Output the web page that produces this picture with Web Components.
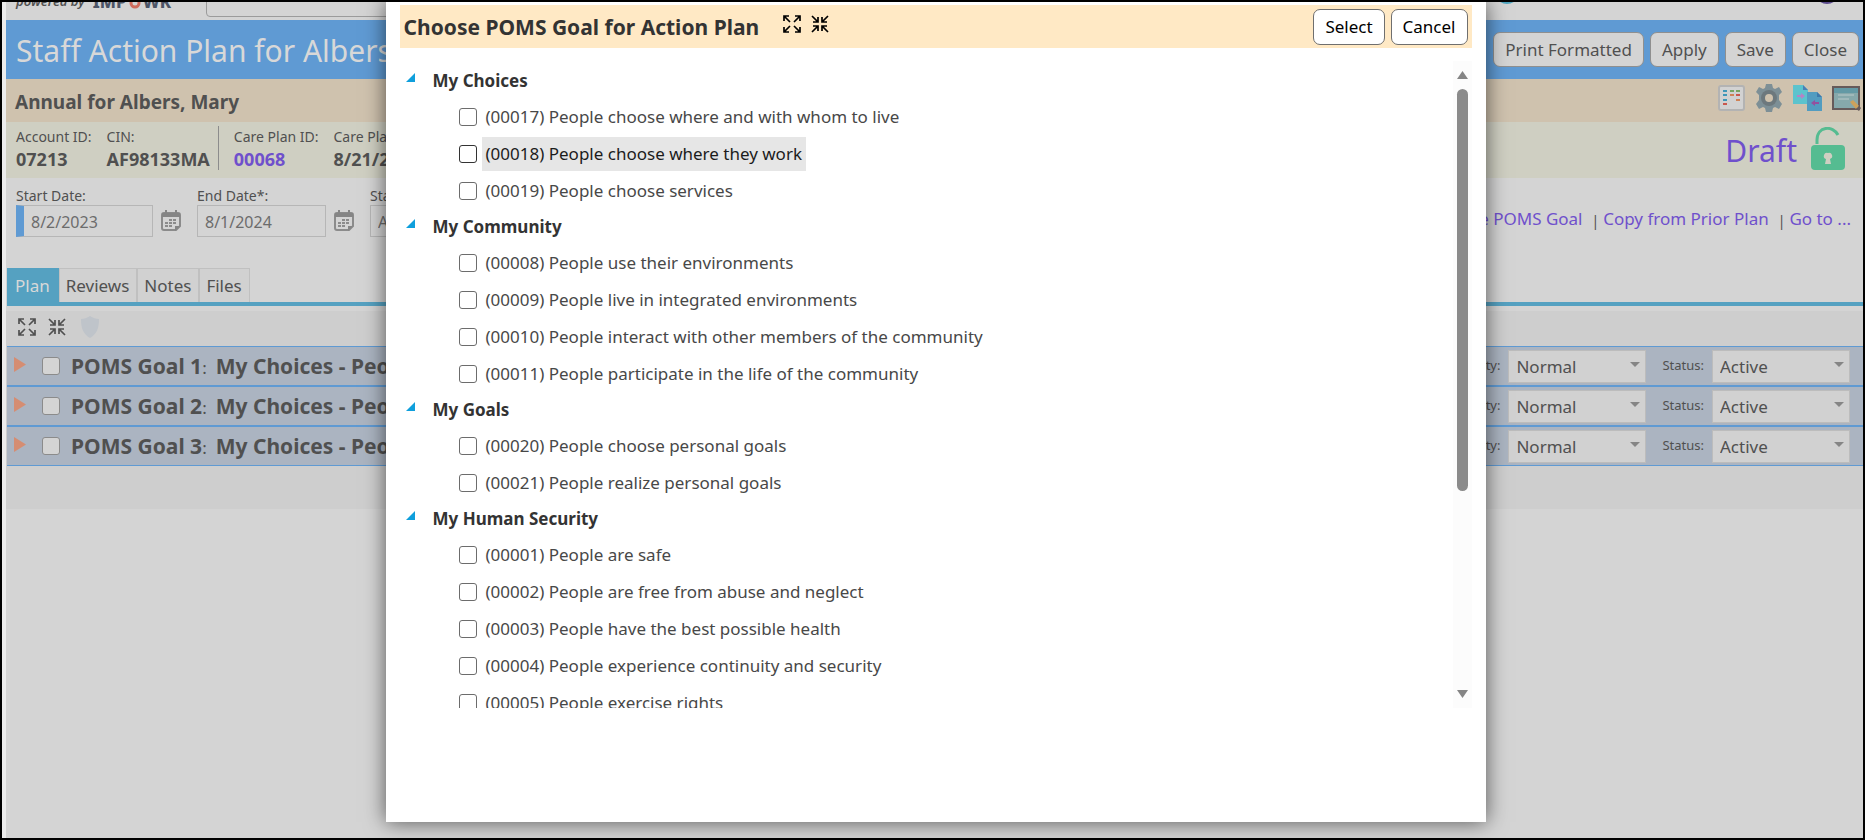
<!DOCTYPE html>
<html lang="en">
<head>
<meta charset="UTF-8">
<meta name="viewport" content="width=device-width, initial-scale=1.0">
<title>Staff Action Plan</title>
<style>
    * { box-sizing: border-box; }

    body {
        margin: 0;
        height: 100vh;
        overflow: hidden;
        font-family: "Noto Sans", "Open Sans", sans-serif;
        font-size: 17px;
        color: #505050;
        background: #d4d4d4;
    }
</style>
</head>
<body>
    <staff-plan-page></staff-plan-page>

<script>
// shared reset for every shadow root
const base = `
    *, *::before, *::after { box-sizing: border-box; }
    button, input, select { font: inherit; color: inherit; margin: 0; }
    a { color: #6f50cc; text-decoration: none; }
    svg { display: block; flex: none; }
`;

const checkbox = `
    input[type="checkbox"] {
        appearance: none;
        flex: none;
        width: 18px;
        height: 18px;
        border: 1px solid #6c6c6c;
        border-radius: 3px;
        background: #fff;
    }
`;

const icons = {
    expand: `
        <svg width="18" height="18" viewBox="0 0 18 18" fill="none" stroke="currentColor" stroke-width="1.700">
            <path d="M1 6V1h5M1 1l6 6M12 1h5v5M17 1l-6 6M1 12v5h5M1 17l6-6M17 12v5h-5M17 17l-6-6"/>
        </svg>`,
    collapse: `
        <svg width="18" height="18" viewBox="0 0 18 18" fill="none" stroke="currentColor" stroke-width="1.700">
            <path d="M7 2v5H2M7 7L1 1M11 2v5h5M11 7l6-6M2 11h5v5M7 11l-6 6M16 11h-5v5M11 11l6 6"/>
        </svg>`,
    shield: `
        <svg width="20" height="24" viewBox="0 0 20 24">
            <path d="M10 1c3 2 6 3 9 3 0 9-2 15-9 19C3 19 1 13 1 4c3 0 6-1 9-3z" fill="#bfc4ca"/>
        </svg>`,
    calendar: `
        <svg width="20" height="22" viewBox="0 0 20 22">
            <path d="M3 3h14a2 2 0 0 1 2 2v11l-4 4H3a2 2 0 0 1-2-2V5a2 2 0 0 1 2-2z" fill="none" stroke="#8b8b8b" stroke-width="2"/>
            <path d="M1 3h18v4H1zM4 0h2v4H4zM14 0h2v4h-2zM14 21v-5h5z" fill="#858585"/>
            <g fill="#8b8b8b">
                <path d="M8 9h3v2H8zM12 9h3v2h-3zM4 12h3v2H4zM8 12h3v2H8zM12 12h3v2h-3zM4 15h3v2H4zM8 15h3v2H8z"/>
            </g>
        </svg>`,
    list: `
        <svg width="27" height="26" viewBox="0 0 27 26">
            <rect x="1" y="1" width="25" height="24" rx="2" fill="#d2d2d2" stroke="#b3b3b3" stroke-width="2"/>
            <path d="M5 5h4v2H5zM5 9h4v2H5zM5 14h4v2H5z" fill="#3f97b8"/>
            <path d="M12 5h4v2h-4zM18 5h4v2h-4z" fill="#76a561"/>
            <path d="M12 9h4v2h-4zM18 14h4v2h-4z" fill="#d08256"/>
            <path d="M18 9h4v2h-4zM5 18h4v2H5z" fill="#c9584e"/>
        </svg>`,
    gear: `
        <svg width="28" height="30" viewBox="0 0 28 30">
            <path d="M11 1h6l1 4 2 1 4-2 3 5-3 3v5l3 4-3 5-4-2-2 1-1 4h-6l-1-4-2-1-4 2-3-5 3-4v-5L1 9l3-5 4 2 2-1z" fill="#7d8f96"/>
            <circle cx="14" cy="15" r="8" fill="#6d787d"/>
            <circle cx="14" cy="15" r="4" fill="#cfc2ae"/>
        </svg>`,
    copy: `
        <svg width="29" height="28" viewBox="0 0 29 28">
            <path d="M0 1h10l5 5v14H0z" fill="#5cc3cd"/>
            <path d="M10 1l5 5h-5z" fill="#4b7fb5"/>
            <path d="M14 8h10l5 5v14H14z" fill="#529cc0"/>
            <path d="M24 8l5 5h-5z" fill="#3e79ab"/>
            <path d="M4 11h4V9l4 3-4 3v-2H4z" fill="#b583c6"/>
            <path d="M26 18h-4v-2l-4 3 4 3v-2h4z" fill="#93519f"/>
        </svg>`,
    board: `
        <svg width="29" height="28" viewBox="0 0 29 28">
            <rect x="1" y="3" width="26" height="22" fill="#86a8ab" stroke="#665a5a" stroke-width="2"/>
            <path d="M2 4h24v5H2z" fill="#6399a5"/>
            <path d="M6 11h16M6 15h11" stroke="#b9c9ca" stroke-width="1"/>
            <path d="M18 18l3-2 6 6-3 3z" fill="#cda25c"/>
            <path d="M24 25l3-3 2 2-2 3z" fill="#665a5a"/>
        </svg>`,
    unlock: `
        <svg width="34" height="43" viewBox="0 0 34 43">
            <path d="M6 17v-4C6 -1 22 -2 27 8" fill="none" stroke="#55bc91" stroke-width="3"/>
            <rect y="18" width="34" height="25" rx="4" fill="#55bc91"/>
            <path d="M17 26a3 3 0 0 1 2 6l1 5h-6l1-5a3 3 0 0 1 2-6z" fill="#cfcfc2"/>
        </svg>`
};

class AppHeader extends HTMLElement {
    constructor() {
        super();
        this.attachShadow({ mode: 'open' }).innerHTML = `
            <style>
                ${base}
                /* scrolled under the top edge, only its lower part shows */
                :host {
                    display: flex;
                    align-items: flex-end;
                    height: 18px;
                    overflow: hidden;
                    padding: 0 24px 0 10px;
                    line-height: 20px;
                }
                .powered { margin-bottom: 9px; font-size: 13px; font-style: italic; font-weight: 600; }
                .brand {
                    display: flex;
                    align-items: flex-end;
                    gap: 2px;
                    width: 113px;
                    margin: 0 0 6px 8px;
                    font-size: 17px;
                    font-weight: 800;
                    line-height: 24px;
                    color: #4c5466;
                }
                .brand svg { margin-bottom: 5px; }
                input {
                    width: 420px;
                    height: 32px;
                    margin-bottom: 3px;
                    border: 1px solid #9b9b9b;
                    border-radius: 4px;
                    background: #d4d4d4;
                }
                .dots {
                    display: flex;
                    flex: 1;
                    gap: 296px;
                    justify-content: flex-end;
                    align-self: flex-start;
                }
                .dots svg { margin-top: -22px; }
            </style>
            <span class="powered">powered by</span>
            <span class="brand">IMP
                <svg width="12" height="12" viewBox="0 0 12 12"><circle cx="6" cy="6" r="4" fill="none" stroke="#cf6b5c" stroke-width="3"/></svg>
                WR</span>
            <input type="search" aria-label="Search">
            <span class="dots">
                <svg width="24" height="24" viewBox="0 0 24 24"><circle cx="12" cy="12" r="12" fill="#4fa5bf"/></svg>
                <svg width="24" height="24" viewBox="0 0 24 24"><circle cx="12" cy="12" r="11" fill="none" stroke="#5a4a8c" stroke-width="2"/></svg>
            </span>
        `;
    }
}

class TitleBar extends HTMLElement {
    constructor() {
        super();
        this.attachShadow({ mode: 'open' }).innerHTML = `
            <style>
                ${base}
                :host {
                    display: flex;
                    align-items: center;
                    justify-content: space-between;
                    height: 59px;
                    padding: 0 4px 0 10px;
                    background: #5f9ad3;
                }
                h1 { margin: 0; padding-top: 2px; font-size: 30px; font-weight: 400; color: #d8d8d8; white-space: nowrap; }
                .actions { display: flex; gap: 6px; }
                ::slotted(button) {
                    height: 35px;
                    padding: 0 11px;
                    border: 1px solid #8f8f8f;
                    border-radius: 7px;
                    background: #d4d4d4;
                    font: inherit;
                    color: #505050;
                    white-space: nowrap;
                }
            </style>
            <h1>${this.getAttribute('heading')}</h1>
            <div class="actions"><slot></slot></div>
        `;
    }
}

class PlanSummary extends HTMLElement {
    constructor() {
        super();
        this.attachShadow({ mode: 'open' }).innerHTML = `
            <style>
                ${base}
                :host { display: block; white-space: nowrap; }
                .name, .ids { display: flex; align-items: center; justify-content: space-between; }
                .name { height: 43px; padding: 2px 2px 0 9px; background: #cfc2ae; }
                h2 { margin: 0; font-size: 19px; line-height: 26px; }
                .tools { display: flex; align-items: center; gap: 10px; padding-bottom: 8px; }
                .ids { height: 56px; padding: 0 18px 0 10px; background: #cfcfc2; }
                dl { display: flex; margin: 0; padding-bottom: 4px; gap: 15px; }
                dl div { display: flex; flex-direction: column; }
                dt { font-size: 14px; line-height: 22px; }
                dd { margin: 0; font-size: 18px; font-weight: 700; line-height: 22px; }
                .line { width: 1px; margin-left: -7px; background: #8c8c8c; }
                .state { display: flex; align-items: center; gap: 14px; font-size: 30px; }
                .state svg { margin-bottom: 4px; }
            </style>
            <div class="name">
                <h2>Annual for Albers, Mary</h2>
                <div class="tools">${icons.list}${icons.gear}${icons.copy}${icons.board}</div>
            </div>
            <div class="ids">
                <dl>
                    <div><dt>Account ID:</dt><dd>07213</dd></div>
                    <div><dt>CIN:</dt><dd>AF98133MA</dd></div>
                    <div class="line"></div>
                    <div><dt>Care Plan ID:</dt><dd><a href="#plan">00068</a></dd></div>
                    <div><dt>Care Plan Date:</dt><dd>8/21/2023</dd></div>
                </dl>
                <div class="state"><a href="#draft">Draft</a>${icons.unlock}</div>
            </div>
        `;
    }
}

class PlanFields extends HTMLElement {
    constructor() {
        super();
        this.attachShadow({ mode: 'open' }).innerHTML = `
            <style>
                ${base}
                :host {
                    display: flex;
                    justify-content: space-between;
                    height: 90px;
                    padding: 8px 12px 0 10px;
                    white-space: nowrap;
                }
                .fields { display: flex; gap: 16px; }
                .field { display: flex; flex-direction: column; }
                .field label { font-size: 14px; line-height: 19px; }
                .box { display: flex; align-items: center; gap: 8px; }
                input {
                    width: 129px;
                    height: 32px;
                    padding: 2px 7px 0;
                    border: 1px solid #b6b6b6;
                    background: #d4d4d4;
                    font-size: 16px;
                    color: #6c6c6c;
                }
                .required { width: 137px; border-left: 8px solid #5f9ad3; }
                nav { display: flex; padding-top: 21px; line-height: 24px; }
                nav span { padding: 2px 4px 0 9px; font-size: 14px; }
            </style>
            <div class="fields">
                <div class="field">
                    <label for="start">Start Date:</label>
                    <div class="box"><input class="required" id="start" value="8/2/2023">${icons.calendar}</div>
                </div>
                <div class="field">
                    <label for="end">End Date*:</label>
                    <div class="box"><input id="end" value="8/1/2024">${icons.calendar}</div>
                </div>
                <div class="field">
                    <label for="state">Status:</label>
                    <div class="box"><input id="state" value="Active"></div>
                </div>
            </div>
            <nav>
                <a href="#create">Create POMS Goal</a><span>|</span>
                <a href="#copy">Copy from Prior Plan</a><span>|</span>
                <a href="#goto">Go to ...</a>
            </nav>
        `;
    }
}

class PlanTabs extends HTMLElement {
    constructor() {
        super();
        this.attachShadow({ mode: 'open' }).innerHTML = `
            <style>
                ${base}
                :host { display: flex; margin: 0 0 5px 1px; border-bottom: 4px solid #55a1c1; }
                button {
                    height: 34px;
                    padding: 0 7px 0 6px;
                    border: 1px solid #c0c0c0;
                    border-bottom: 0;
                    background: #d1d1d1;
                }
                button[aria-selected="true"] { padding: 0 8px 0 7px; border-color: #55a1c1; background: #55a1c1; color: #d8d8d8; }
            </style>
            <button role="tab" aria-selected="true">Plan</button>
            <button role="tab">Reviews</button>
            <button role="tab">Notes</button>
            <button role="tab">Files</button>
        `;
    }
}

class GoalRow extends HTMLElement {
    constructor() {
        super();
        const no = this.getAttribute('number');
        this.attachShadow({ mode: 'open' }).innerHTML = `
            <style>
                ${base}
                ${checkbox}
                :host {
                    display: flex;
                    align-items: center;
                    justify-content: space-between;
                    height: 40px;
                    padding: 0 13px 0 7px;
                    border: solid #5f9ad3;
                    border-width: 1px 0;
                    background: #abb4c1;
                    white-space: nowrap;
                }
                .goal, .settings { display: flex; align-items: center; }
                .goal svg { margin: 0 16px 4px 0; }
                input[type="checkbox"] { margin-right: 11px; border-color: #8b8b8b; background: #d4d4d4; }
                h3 { margin: 0; padding-top: 2px; font-size: 21px; line-height: 30px; }
                h3 span { margin-right: 9px; font-size: 17px; font-weight: 400; }
                label { margin-right: 8px; padding-bottom: 3px; font-size: 13px; }
                .pick { display: grid; align-items: center; width: 138px; margin-right: 16px; }
                .pick:last-child { margin-right: 0; }
                .pick > * { grid-area: 1 / 1; }
                .pick svg { justify-self: end; margin: 0 6px 4px 0; pointer-events: none; }
                select {
                    appearance: none;
                    width: 100%;
                    height: 33px;
                    padding: 0 7px;
                    border: 1px solid #bcbcbc;
                    border-radius: 0;
                    background: #d1d1d1;
                }
            </style>
            <div class="goal">
                <svg width="12" height="15" viewBox="0 0 12 15"><path d="M0 0l12 7.500L0 15z" fill="#d58d72"/></svg>
                <input type="checkbox" aria-label="Goal ${no}">
                <h3>POMS Goal ${no}<span>:</span>${this.getAttribute('goal')}</h3>
            </div>
            <div class="settings">
                <label for="priority">Priority:</label>
                <div class="pick">
                    <select id="priority"><option>Normal</option></select>
                    <svg width="10" height="5" viewBox="0 0 10 5"><path d="M0 0h10L5 5z" fill="#858585"/></svg>
                </div>
                <label for="status">Status:</label>
                <div class="pick">
                    <select id="status"><option>Active</option></select>
                    <svg width="10" height="5" viewBox="0 0 10 5"><path d="M0 0h10L5 5z" fill="#858585"/></svg>
                </div>
            </div>
        `;
    }
}

class GoalPanel extends HTMLElement {
    constructor() {
        super();
        this.attachShadow({ mode: 'open' }).innerHTML = `
            <style>
                ${base}
                :host { display: block; padding: 0 0 43px 1px; background: #cecece; }
                .tools { display: flex; align-items: center; gap: 12px; height: 35px; padding: 0 11px 4px; }
                .tools svg:last-child { margin-left: 2px; }
            </style>
            <div class="tools">${icons.expand}${icons.collapse}${icons.shield}</div>
            <slot></slot>
        `;
    }
}

class TreeItem extends HTMLElement {
    constructor() {
        super();
        this.attachShadow({ mode: 'open' }).innerHTML = `
            <style>
                ${base}
                ${checkbox}
                :host { display: block; height: 37px; padding-left: 59px; color: #484848; }
                label { display: inline-flex; align-items: center; height: 37px; }
                span { margin-left: 5px; padding: 0 4px; line-height: 34px; }
                :host([active]) { color: #1c1c1c; }
                :host([active]) span { background: #e6e6e6; }
                :host([active]) input { border-color: #333; }
            </style>
            <label><input type="checkbox"><span><slot></slot></span></label>
        `;
    }
}

class TreeGroup extends HTMLElement {
    constructor() {
        super();
        this.attachShadow({ mode: 'open' }).innerHTML = `
            <style>
                ${base}
                :host { display: block; }
                .head { display: flex; align-items: center; gap: 18px; height: 35px; padding-left: 6px; color: #333; }
                .head svg { margin-bottom: 6px; }
                h3 { margin: 0; font-size: 17px; line-height: 24px; }
            </style>
            <div class="head">
                <svg width="9" height="9" viewBox="0 0 9 9"><path d="M9 0v9H0z" fill="#0f9fdc"/></svg>
                <h3>${this.getAttribute('heading')}</h3>
            </div>
            <slot></slot>
        `;
    }
}

class GoalDialog extends HTMLElement {
    constructor() {
        super();
        this.attachShadow({ mode: 'open' }).innerHTML = `
            <style>
                ${base}
                /* floats over the page, pinned to its top edge */
                :host {
                    position: absolute;
                    top: 0;
                    left: 0;
                    right: 0;
                    display: flex;
                    justify-content: center;
                    padding-left: 6px;
                }
                .dialog {
                    width: 1100px;
                    max-width: 90%;
                    height: calc(100vh - 20px);
                    padding: 3px 14px;
                    background: #fff;
                    box-shadow: 0 0 20px rgba(0, 0, 0, 0.6);
                    color: #333;
                }
                header {
                    display: flex;
                    align-items: center;
                    height: 43px;
                    padding: 0 4px;
                    background: #ffe9c5;
                }
                h2 { margin: 0 24px 0 0; font-size: 21px; line-height: 28px; white-space: nowrap; }
                .tree-tools { display: flex; flex: 1; gap: 10px; padding-bottom: 6px; color: #000; }
                .actions { display: flex; gap: 6px; }
                button {
                    height: 36px;
                    padding: 0 11px;
                    border: 1px solid #6f6f6f;
                    border-radius: 7px;
                    background: #fff;
                    color: #000;
                }
                .body { display: flex; height: 77vh; margin-top: 13px; }
                .tree { flex: 1; overflow: hidden; padding-top: 2px; }
                .scroll {
                    display: flex;
                    flex-direction: column;
                    align-items: center;
                    width: 19px;
                    padding: 10px 0;
                    background: #fcfcfc;
                }
                .track { flex: 1; width: 11px; padding: 10px 0; }
                .thumb { height: 68%; border-radius: 6px; background: #8b8b8b; }
            </style>
            <div class="dialog" role="dialog" aria-label="Choose POMS Goal">
                <header>
                    <h2>Choose POMS Goal for Action Plan</h2>
                    <div class="tree-tools">${icons.expand}${icons.collapse}</div>
                    <div class="actions">
                        <button>Select</button>
                        <button>Cancel</button>
                    </div>
                </header>
                <div class="body">
                    <div class="tree"><slot></slot></div>
                    <div class="scroll">
                        <svg width="11" height="8" viewBox="0 0 11 8"><path d="M5.500 0L11 8H0z" fill="#858585"/></svg>
                        <div class="track"><div class="thumb"></div></div>
                        <svg width="11" height="8" viewBox="0 0 11 8"><path d="M0 0h11L5.500 8z" fill="#858585"/></svg>
                    </div>
                </div>
            </div>
        `;
    }
}

class StaffPlanPage extends HTMLElement {
    constructor() {
        super();
        this.attachShadow({ mode: 'open' }).innerHTML = `
            <style>
                ${base}
                :host {
                    display: block;
                    position: relative;
                    height: 100vh;
                    overflow: hidden;
                    border: 2px solid #000;
                }
                main { height: 100%; border-left: 4px solid #ececec; }
            </style>
            <main>
                <app-header></app-header>
                <title-bar heading="Staff Action Plan for Albers, Mary">
                    <button>Print Formatted</button>
                    <button>Apply</button>
                    <button>Save</button>
                    <button>Close</button>
                </title-bar>
                <plan-summary></plan-summary>
                <plan-fields></plan-fields>
                <plan-tabs></plan-tabs>
                <goal-panel>
                    <goal-row number="1" goal="My Choices - People choose"></goal-row>
                    <goal-row number="2" goal="My Choices - People choose"></goal-row>
                    <goal-row number="3" goal="My Choices - People choose"></goal-row>
                </goal-panel>
            </main>
            <goal-dialog>
                <tree-group heading="My Choices">
                    <tree-item>(00017) People choose where and with whom to live</tree-item>
                    <tree-item active>(00018) People choose where they work</tree-item>
                    <tree-item>(00019) People choose services</tree-item>
                </tree-group>
                <tree-group heading="My Community">
                    <tree-item>(00008) People use their environments</tree-item>
                    <tree-item>(00009) People live in integrated environments</tree-item>
                    <tree-item>(00010) People interact with other members of the community</tree-item>
                    <tree-item>(00011) People participate in the life of the community</tree-item>
                </tree-group>
                <tree-group heading="My Goals">
                    <tree-item>(00020) People choose personal goals</tree-item>
                    <tree-item>(00021) People realize personal goals</tree-item>
                </tree-group>
                <tree-group heading="My Human Security">
                    <tree-item>(00001) People are safe</tree-item>
                    <tree-item>(00002) People are free from abuse and neglect</tree-item>
                    <tree-item>(00003) People have the best possible health</tree-item>
                    <tree-item>(00004) People experience continuity and security</tree-item>
                    <tree-item>(00005) People exercise rights</tree-item>
                </tree-group>
            </goal-dialog>
        `;
    }
}

customElements.define('app-header', AppHeader);
customElements.define('title-bar', TitleBar);
customElements.define('plan-summary', PlanSummary);
customElements.define('plan-fields', PlanFields);
customElements.define('plan-tabs', PlanTabs);
customElements.define('goal-row', GoalRow);
customElements.define('goal-panel', GoalPanel);
customElements.define('tree-item', TreeItem);
customElements.define('tree-group', TreeGroup);
customElements.define('goal-dialog', GoalDialog);
customElements.define('staff-plan-page', StaffPlanPage);
</script>
</body>
</html>
